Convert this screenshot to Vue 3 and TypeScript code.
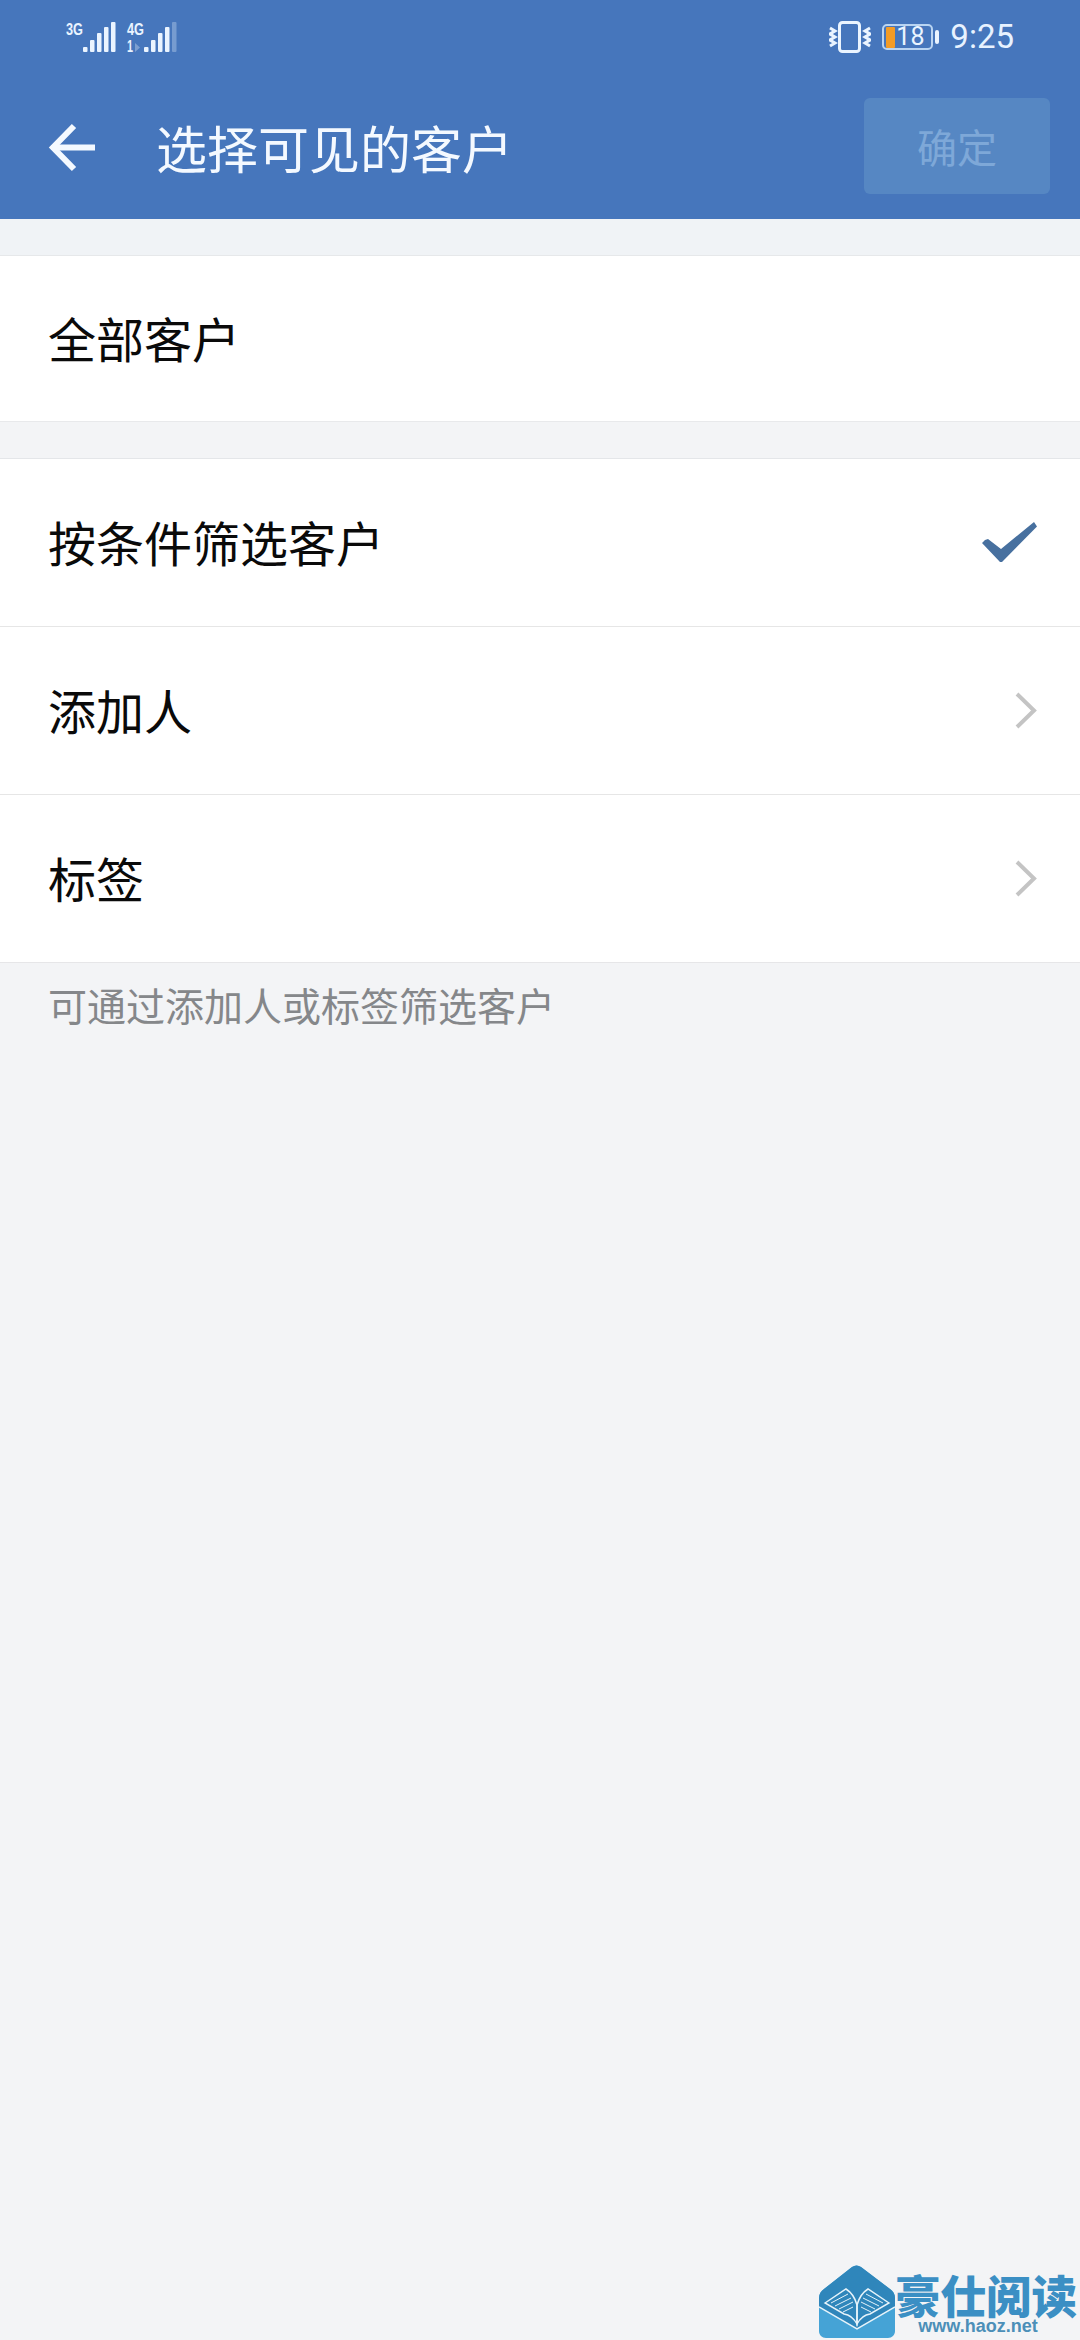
<script setup lang="ts">
interface FilterRow {
  label: string
  icon: 'check' | 'chevron'
}

const filterRows: FilterRow[] = [
  { label: '按条件筛选客户', icon: 'check' },
  { label: '添加人', icon: 'chevron' },
  { label: '标签', icon: 'chevron' }
]

const leftBars = [
  { x: 83, y: 47, h: 5 },
  { x: 90, y: 40, h: 12 },
  { x: 97, y: 33, h: 19 },
  { x: 104, y: 27, h: 25 },
  { x: 111, y: 22, h: 30 }
]

const rightBars = [
  { x: 144, y: 47, h: 5, o: 1 },
  { x: 151, y: 40, h: 12, o: 1 },
  { x: 158, y: 33, h: 19, o: 1 },
  { x: 165, y: 27, h: 25, o: 1 },
  { x: 172, y: 22, h: 30, o: 0.3 }
]
</script>

<template>
  <div class="page">
    <header class="header">
      <div class="status">
        <svg class="signal" width="120" height="34" viewBox="60 20 120 34">
          <text x="66" y="35" class="net" textLength="17" lengthAdjust="spacingAndGlyphs">3G</text>
          <text x="127" y="35" class="net" textLength="17" lengthAdjust="spacingAndGlyphs">4G</text>
          <text x="127" y="52" class="net" textLength="6" lengthAdjust="spacingAndGlyphs">1</text>
          <path d="M135 43v9l5-4.500z" fill="#fff" opacity="0.3" />
          <rect v-for="b in leftBars" :key="b.x" :x="b.x" :y="b.y" width="4.500" :height="b.h" rx="1" fill="#eaf4ff" />
          <rect v-for="b in rightBars" :key="b.x" :x="b.x" :y="b.y" width="4.500" :height="b.h" rx="1" fill="#eaf4ff" :opacity="b.o" />
        </svg>
        <div class="status-right">
          <svg width="42" height="32" viewBox="0 0 42 32" fill="none" stroke="#eaf4ff">
            <rect x="10.500" y="1.500" width="20" height="29" rx="3" stroke-width="3" />
            <path d="M1 7l5 3-5 3 5 3-5 3 5 3-5 3" stroke-width="3" />
            <path d="M41 7l-5 3 5 3-5 3 5 3-5 3 5 3" stroke-width="3" />
          </svg>
          <div class="battery">
            <span class="battery-fill"></span>
            <span class="battery-num">18</span>
            <span class="battery-nub"></span>
          </div>
          <span class="time">9:25</span>
        </div>
      </div>
      <div class="toolbar">
        <svg class="back" width="48" height="50" viewBox="0 0 48 50" fill="none" stroke="#f4f9ff" stroke-width="6">
          <path d="M47 24.500H6" />
          <path d="M26 3L5 24.500 26 46" />
        </svg>
        <h1 class="title">选择可见的客户</h1>
        <button class="confirm" type="button">确定</button>
      </div>
    </header>

    <div class="band"></div>

    <section class="group first">
      <div class="row">
        <span class="label">全部客户</span>
      </div>
    </section>

    <section class="group second">
      <div v-for="row in filterRows" :key="row.label" class="row">
        <span class="label">{{ row.label }}</span>
        <svg v-if="row.icon === 'check'" class="check" width="56" height="41" viewBox="0 0 56 41">
          <path d="M3 18l3-1 13 10L52 0l3 4.500L20 40h-2L0 21z" fill="#47709f" />
        </svg>
        <svg v-else class="chevron" width="22" height="37" viewBox="0 0 22 37" fill="none" stroke="#c4c4c4" stroke-width="4">
          <path d="M2 2l17 16.500L2 35" />
        </svg>
      </div>
    </section>

    <p class="hint">可通过添加人或标签筛选客户</p>

    <div class="watermark">
      <svg width="76" height="73" viewBox="0 0 76 73">
        <path d="M33 2c3-2 6-2 9 0l29 22c3 2 5 5 5 9v33c0 4-3 7-7 7H7c-4 0-7-3-7-7V33c0-4 2-7 5-9z" fill="#45a3d6" />
        <path d="M33 2c3-2 6-2 9 0l29 22c3 2 5 5 5 9v9L38 64 0 42v-9c0-4 2-7 5-9z" fill="#2f86bb" />
        <path d="M0 42l38 22 38-22" fill="none" stroke="#e6f3fa" stroke-width="1.500" />
        <g fill="none" stroke="#e6f3fa" stroke-width="1.500">
          <path d="M6 38L27 24q8 5 11 16v19q-5-9-13-10z" />
          <path d="M70 38L49 24q-8 5-11 16v19q5-9 13-10z" />
          <path d="M12 38l17-9M16 41l16-8M20 44l14-7M24 47l10-5M64 38l-17-9M60 41l-16-8M56 44l-14-7M52 47l-10-5" stroke-width="1" />
        </g>
      </svg>
      <div class="mark-text">
        <span class="mark-name">豪仕阅读</span>
        <span class="mark-url">www.haoz.net</span>
      </div>
    </div>
  </div>
</template>

<style scoped>
.page {
  position: relative;
  height: 2340px;
  overflow: hidden;
  background: #f3f4f6;
  font-family: "Noto Sans CJK SC", "Noto Sans", sans-serif;
}

.header {
  height: 219px;
  background: #4676bc;
  color: #f4f9ff;
}

.status {
  height: 72px;
  display: flex;
  justify-content: space-between;
  align-items: flex-start;
  padding: 20px 66px 0 60px;
  box-sizing: border-box;
}

.net {
  font-family: "Liberation Sans", sans-serif;
  font-size: 16px;
  font-weight: 700;
  fill: #eaf4ff;
}

.status-right {
  display: flex;
  align-items: center;
  height: 34px;
}

.battery {
  position: relative;
  width: 51px;
  height: 26px;
  margin-left: 11px;
  box-sizing: border-box;
  border: 2px solid #b9d4f2;
  border-radius: 5px;
  display: flex;
  align-items: center;
}

.battery-fill {
  width: 9px;
  height: 21px;
  margin-left: 2px;
  background: #f39c27;
  border-radius: 1px;
}

.battery-num {
  margin-left: 1px;
  font-family: Roboto, sans-serif;
  font-size: 25px;
  line-height: 22px;
  color: #eaf4ff;
}

.battery-nub {
  position: absolute;
  right: -8px;
  top: 4px;
  width: 4px;
  height: 14px;
  background: #eaf4ff;
  border-radius: 2px;
}

.time {
  margin-left: 17px;
  font-family: Roboto, sans-serif;
  font-size: 33px;
  line-height: 34px;
  color: #e8f2ff;
}

.toolbar {
  height: 147px;
  display: flex;
  align-items: center;
  padding: 0 30px 0 48px;
  box-sizing: border-box;
}

.back {
  flex: none;
  margin-top: 4px;
}

.title {
  flex: 1;
  margin: 2px 0 0 60px;
  font-size: 51px;
  font-weight: 400;
  line-height: 60px;
}

.confirm {
  width: 186px;
  height: 96px;
  border: none;
  border-radius: 6px;
  background: #5687c3;
  color: #7ea8d8;
  font-family: inherit;
  font-size: 40px;
  padding: 0;
}

.band {
  height: 36px;
  background: #f0f3f6;
}

.group {
  background: #fff;
}

.first {
  border-top: 1px solid #e6e8ea;
  border-bottom: 1px solid #e8e9eb;
}

.first .row {
  height: 165px;
}

.second {
  margin-top: 36px;
  border-top: 1px solid #e4e6e9;
  border-bottom: 1px solid #e6e6e8;
}

.row {
  height: 167px;
  display: flex;
  align-items: center;
  justify-content: space-between;
  padding: 0 43px 0 48px;
  box-sizing: border-box;
}

.row + .row {
  height: 168px;
  border-top: 1px solid #e6e6e6;
}

.label {
  margin-top: -3px;
  font-size: 48px;
  line-height: 60px;
  color: #0a0a0a;
}

.check {
  margin-right: -1px;
  margin-top: -1px;
}

.chevron {
  flex: none;
}

.hint {
  margin: 16px 0 0 48px;
  font-size: 39px;
  line-height: 50px;
  color: #85878a;
}

.watermark {
  position: absolute;
  left: 819px;
  top: 2265px;
  display: flex;
}

.mark-text {
  display: flex;
  flex-direction: column;
  align-items: center;
}

.mark-name {
  margin-top: 4px;
  font-family: "Noto Sans CJK SC", serif;
  font-size: 45.500px;
  font-weight: 900;
  line-height: 50px;
  color: #3b8fc4;
  white-space: nowrap;
}

.mark-url {
  margin-right: 16px;
  font-family: "Liberation Sans", sans-serif;
  font-size: 18px;
  font-weight: 700;
  line-height: 14px;
  color: #4c8fb8;
}
</style>

<style>
html,
body {
  background: #f3f4f6;
}
</style>
